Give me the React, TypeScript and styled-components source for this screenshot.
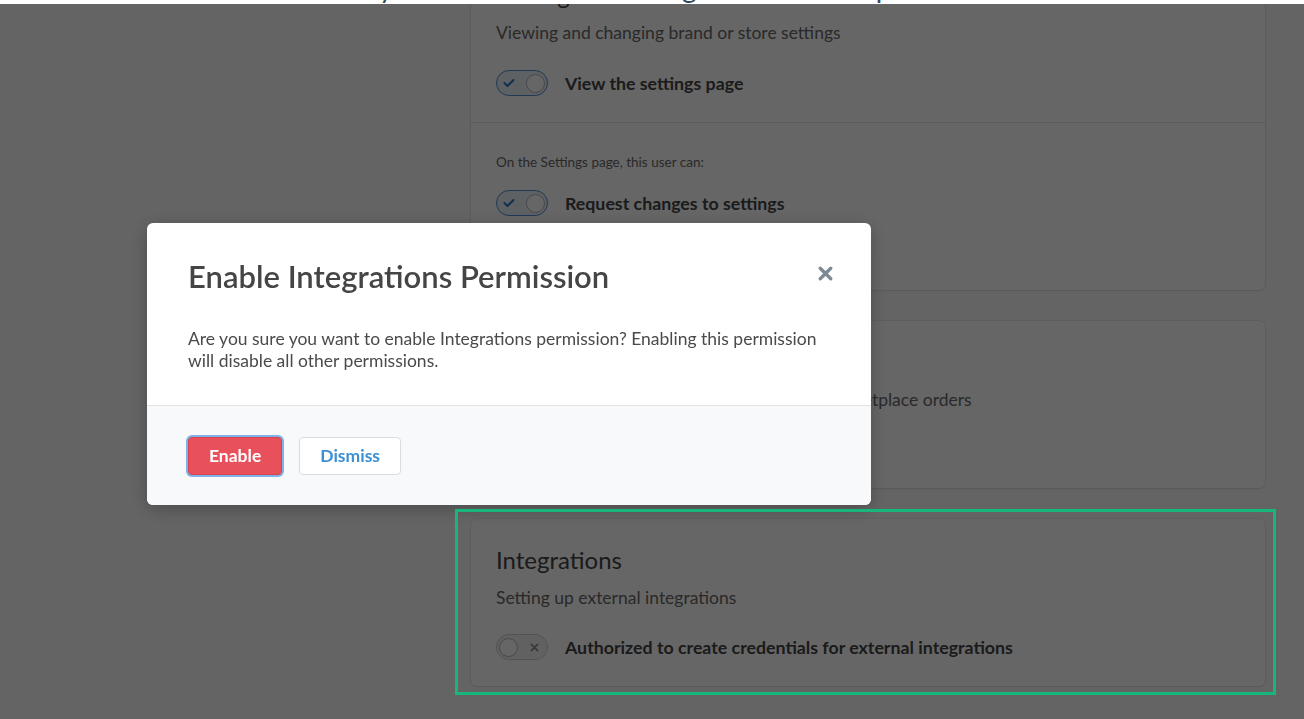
import React from 'react';
import styled, { createGlobalStyle } from 'styled-components';

const GlobalStyle = createGlobalStyle`
    html, body {
        margin: 0;
        padding: 0;
        background: #fafafa;
        overflow: hidden;
    }
    body {
        font-family: Lato, "Open Sans", sans-serif;
        color: #4a4a4a;
    }
`;

const TopBar = styled.div`
    height: 4px;
    overflow: hidden;
    background: #ffffff;
    position: relative;
    z-index: 20;
`;

const TopBarText = styled.div`
    margin-top: -31px;
    padding-left: 189px;
    font-size: 28px;
    line-height: 36px;
    color: #34495e;
    white-space: nowrap;
`;

const Main = styled.div`
    height: 715px;
    overflow: hidden;
    display: grid;
    grid-template-columns: 471px 794px 1fr;
`;

const Column = styled.div`
    grid-column: 2;
    margin-top: -50px;
    display: flex;
    flex-direction: column;
    gap: 31px;
`;

const Card = styled.div`
    background: #ffffff;
    border-radius: 6px;
    box-shadow: 0 0 0 1px rgba(0, 0, 0, 0.05), 0 1px 3px rgba(0, 0, 0, 0.07);
`;

const CardSection = styled.div<{ $sub?: boolean }>`
    display: flex;
    flex-direction: column;
    padding: ${(p) => (p.$sub ? '30px 25px 28px' : '27px 25px 26px')};
    border-top: ${(p) => (p.$sub ? '1px solid #e6e6e6' : 'none')};
`;

const CardTitle = styled.div`
    font-size: 24px;
    line-height: 28px;
    color: #444444;
`;

const CardDesc = styled.div`
    margin-top: 13px;
    font-size: 17.5px;
    line-height: 22px;
    color: #686868;
`;

const Note = styled.div`
    font-size: 13.5px;
    line-height: 18px;
    color: #686868;
`;

const ToggleRow = styled.div<{ $gap: number }>`
    display: flex;
    align-items: center;
    margin-top: ${(p) => p.$gap}px;
    height: 26px;
`;

const Switch = styled.span<{ $on: boolean }>`
    display: inline-flex;
    align-items: center;
    justify-content: space-between;
    flex-direction: ${(p) => (p.$on ? 'row' : 'row-reverse')};
    box-sizing: border-box;
    width: 52px;
    height: 26px;
    padding: ${(p) => (p.$on ? '0 2px 0 6px' : '0 8px 0 2px')};
    border-radius: 13px;
    border: 1.5px solid ${(p) => (p.$on ? '#4f8fd0' : '#cfcfcf')};
    background: ${(p) => (p.$on ? '#e9f2fb' : '#f3f3f3')};
`;

const Knob = styled.span`
    width: 19px;
    height: 19px;
    border-radius: 50%;
    box-sizing: border-box;
    border: 1.5px solid #b5b5b5;
    background: #ffffff;
`;

const ToggleLabel = styled.span`
    margin-left: 17px;
    font-size: 17.75px;
    font-weight: 700;
    color: #444444;
`;

const Highlighted = styled.div`
    position: relative;
`;

const HighlightFrame = styled.div`
    position: absolute;
    top: -10px;
    left: -16px;
    right: -11px;
    bottom: -9px;
    border: 3px solid #17b67b;
    z-index: 30;
    pointer-events: none;
`;

const Backdrop = styled.div`
    position: fixed;
    top: 4px;
    left: 0;
    right: 0;
    bottom: 0;
    z-index: 10;
    background: rgba(0, 0, 0, 0.6);
    padding: 219px 0 0 147px;
`;

const Dialog = styled.div`
    width: 724px;
    background: #ffffff;
    border-radius: 6px;
    overflow: hidden;
    box-shadow: 0 4px 18px rgba(0, 0, 0, 0.25);
`;

const DialogHeader = styled.div`
    display: flex;
    align-items: center;
    justify-content: space-between;
    padding: 36px 38px 0 41px;
`;

const DialogTitle = styled.h2`
    margin: 0;
    font-size: 31px;
    line-height: 34px;
    font-weight: 600;
    color: #454545;
`;

const CloseButton = styled.button`
    display: flex;
    border: none;
    background: none;
    padding: 0;
    margin-top: -6px;
    cursor: pointer;
`;

const DialogBody = styled.p`
    margin: 0;
    padding: 35px 41px 33px;
    font-size: 17.5px;
    line-height: 22px;
    color: #4a4a4a;
    border-bottom: 1px solid #e2e2e2;
`;

const DialogFooter = styled.div`
    display: flex;
    align-items: center;
    gap: 17px;
    padding: 0 41px;
    height: 99px;
    background: #f8f9fa;
`;

const Button = styled.button<{ $primary?: boolean }>`
    height: 38px;
    padding: 0 20px;
    border-radius: 4px;
    font-family: Lato, "Open Sans", sans-serif;
    font-size: 17.5px;
    font-weight: 700;
    cursor: pointer;
    color: ${(p) => (p.$primary ? '#ffffff' : '#3b8fd3')};
    background: ${(p) => (p.$primary ? '#e8505b' : '#ffffff')};
    border: 1px solid ${(p) => (p.$primary ? '#d9434e' : '#dcdcdc')};
    box-shadow: ${(p) => (p.$primary ? '0 0 0 2px #7db3ea' : 'none')};
`;

const CheckIcon = () => (
    <svg width="12" height="10" viewBox="0 0 12 10">
        <polyline points="1.5,5 4.5,8 10.5,2" fill="none" stroke="#2a74c4" strokeWidth="2" strokeLinecap="round" strokeLinejoin="round" />
    </svg>
);

const CrossIcon = ({ size, color, width }: { size: number; color: string; width: number }) => (
    <svg width={size} height={size} viewBox="0 0 10 10">
        <path d="M1.5 1.5 L8.5 8.5 M8.5 1.5 L1.5 8.5" stroke={color} strokeWidth={width} strokeLinecap="round" />
    </svg>
);

type ToggleProps = { on: boolean; label: string; gap: number };

const Toggle: React.FC<ToggleProps> = ({ on, label, gap }) => (
    <ToggleRow $gap={gap}>
        <Switch $on={on}>
            {on ? <CheckIcon /> : <CrossIcon size={9} color="#8a8a8a" width={1.8} />}
            <Knob />
        </Switch>
        <ToggleLabel>{label}</ToggleLabel>
    </ToggleRow>
);

export default function App() {
    return (
        <>
            <GlobalStyle />
            <TopBar>
                <TopBarText>Select what they can access in the settings and their shops</TopBarText>
            </TopBar>
            <Main>
                <Column>
                    <Card>
                        <CardSection>
                            <CardTitle>Settings</CardTitle>
                            <CardDesc>Viewing and changing brand or store settings</CardDesc>
                            <Toggle on label="View the settings page" gap={26} />
                        </CardSection>
                        <CardSection $sub>
                            <Note>On the Settings page, this user can:</Note>
                            <Toggle on label="Request changes to settings" gap={19} />
                            <Toggle on label="Edit settings" gap={20} />
                        </CardSection>
                    </Card>
                    <Card>
                        <CardSection>
                            <CardTitle>Orders</CardTitle>
                            <CardDesc>Creating, viewing and managing direct and marketplace orders</CardDesc>
                            <Toggle on label="View orders" gap={25} />
                        </CardSection>
                    </Card>
                    <Highlighted>
                        <Card>
                            <CardSection>
                                <CardTitle>Integrations</CardTitle>
                                <CardDesc>Setting up external integrations</CardDesc>
                                <Toggle on={false} label="Authorized to create credentials for external integrations" gap={25} />
                            </CardSection>
                        </Card>
                        <HighlightFrame />
                    </Highlighted>
                </Column>
            </Main>
            <Backdrop>
                <Dialog>
                    <DialogHeader>
                        <DialogTitle>Enable Integrations Permission</DialogTitle>
                        <CloseButton aria-label="Close">
                            <CrossIcon size={15} color="#7d8995" width={2.2} />
                        </CloseButton>
                    </DialogHeader>
                    <DialogBody>
                        Are you sure you want to enable Integrations permission? Enabling this permission will disable all other permissions.
                    </DialogBody>
                    <DialogFooter>
                        <Button $primary>Enable</Button>
                        <Button>Dismiss</Button>
                    </DialogFooter>
                </Dialog>
            </Backdrop>
        </>
    );
}
